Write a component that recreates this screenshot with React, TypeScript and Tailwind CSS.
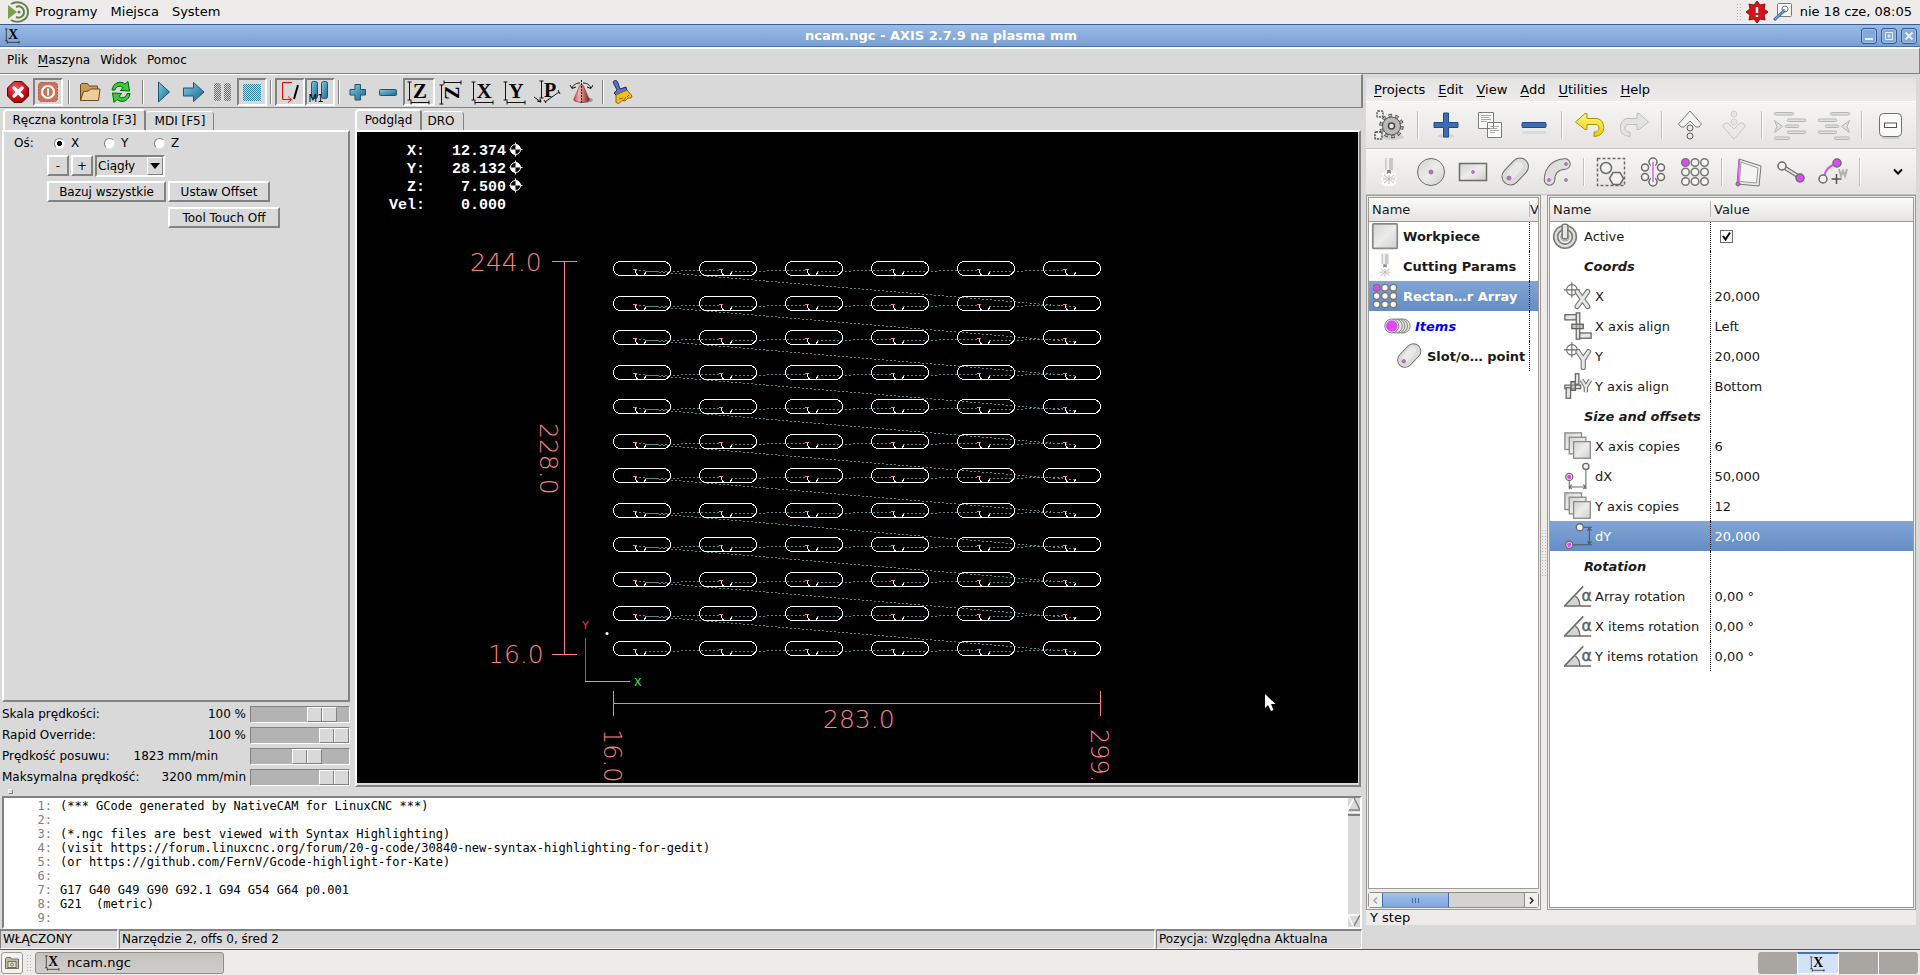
import React, { useState } from 'react';

const SLOT_COLS = [0, 1, 2, 3, 4, 5];
const SLOT_ROWS = [0, 1, 2, 3, 4, 5, 6, 7, 8, 9, 10, 11];

const gcode = [
  '(*** GCode generated by NativeCAM for LinuxCNC ***)',
  '',
  '(*.ngc files are best viewed with Syntax Highlighting)',
  '(visit https://forum.linuxcnc.org/forum/20-g-code/30840-new-syntax-highlighting-for-gedit)',
  '(or https://github.com/FernV/Gcode-highlight-for-Kate)',
  '',
  'G17 G40 G49 G90 G92.1 G94 G54 G64 p0.001',
  'G21  (metric)',
  '',
];

const overrides = [
  { label: 'Skala prędkości:', value: '100 %', pos: 83, pad: 'pr-1' },
  { label: 'Rapid Override:', value: '100 %', pos: 100, pad: 'pr-1' },
  { label: 'Prędkość posuwu:', value: '1823 mm/min', pos: 60, pad: 'pr-8' },
  { label: 'Maksymalna prędkość:', value: '3200 mm/min', pos: 100, pad: 'pr-1' },
];

type Param = { name: string; value?: string; icon?: React.ReactNode; kind?: 'group' | 'active' | 'selected' };

/* ---------- shared defs ---------- */

function Defs() {
  return (
    <svg width="0" height="0" className="absolute" aria-hidden="true">
      <defs>
        <linearGradient id="metal" x1="0" y1="0" x2="1" y2="1">
          <stop offset="0" stopColor="#d2d3d0" />
          <stop offset="0.5" stopColor="#ececea" />
          <stop offset="1" stopColor="#cfcfcd" />
        </linearGradient>
        <linearGradient id="teal" x1="0" y1="0" x2="1" y2="1">
          <stop offset="0" stopColor="#8fc7de" />
          <stop offset="0.5" stopColor="#4a98ba" />
          <stop offset="1" stopColor="#24678a" />
        </linearGradient>
        <linearGradient id="gold" x1="0" y1="0" x2="0" y2="1">
          <stop offset="0" stopColor="#fdf28a" />
          <stop offset="1" stopColor="#ecd000" />
        </linearGradient>
        <radialGradient id="redball" cx="0.4" cy="0.3" r="0.8">
          <stop offset="0" stopColor="#ef5a5a" />
          <stop offset="0.6" stopColor="#c80f1c" />
          <stop offset="1" stopColor="#7c0008" />
        </radialGradient>
        <linearGradient id="cone" x1="0" y1="0" x2="1" y2="0">
          <stop offset="0" stopColor="#b04a4a" />
          <stop offset="0.35" stopColor="#f3b0a8" />
          <stop offset="1" stopColor="#7c1f1f" />
        </linearGradient>
        <pattern id="stipple" width="2" height="2" patternUnits="userSpaceOnUse">
          <rect width="1" height="1" fill="#2f7da2" />
          <rect x="1" y="1" width="1" height="1" fill="#2f7da2" />
        </pattern>
      </defs>
    </svg>
  );
}

/* ---------- AXIS toolbar icons ---------- */

function AxisGlyph({ letter, size = 26 }: { letter: string; size?: number }) {
  return (
    <svg width={size} height={size} viewBox="0 0 26 26">
      <path d="M3.500 3v18M1.500 3h4M1.500 21h4M5 23.500h18M5 21.500v4M23 21.500v4" stroke="#111" fill="none" />
      <text x="14" y="19" textAnchor="middle" fontSize="21" fontWeight="700" fontFamily="Liberation Serif, serif">{letter}</text>
    </svg>
  );
}

function RotatedZGlyph() {
  return (
    <svg width="26" height="26" viewBox="0 0 26 26">
      <path d="M3.500 6v19M1.500 6h4M1.500 25h4M6 3.500h17M6 1.500v4M23 1.500v4" stroke="#111" fill="none" />
      <text x="-7" y="15" transform="rotate(90) translate(21 -22)" textAnchor="middle" fontSize="20" fontWeight="700" fontFamily="Liberation Serif, serif">Z</text>
    </svg>
  );
}

function PerspectiveGlyph() {
  return (
    <svg width="28" height="26" viewBox="0 0 28 26">
      <path d="M8.500 2v17M6.500 2h4M6.500 19h4M1 18l7 5M4 22l4 1-1-3M12 23l14-10M25 11l2 4M11 21l2 3" stroke="#111" fill="none" />
      <text x="17" y="18" textAnchor="middle" fontSize="20" fontWeight="700" fontFamily="Liberation Serif, serif">P</text>
    </svg>
  );
}

function StopIcon() {
  return (
    <svg width="24" height="24" viewBox="0 0 24 24">
      <path d="M8 1.500h8L22.500 8v8L16 22.500H8L1.500 16V8z" fill="url(#redball)" stroke="#5e0208" />
      <path d="M8 8l8 8M16 8l-8 8" stroke="#fff" strokeWidth="3.500" strokeLinecap="round" />
    </svg>
  );
}

function PowerIcon() {
  return (
    <svg width="22" height="22" viewBox="0 0 22 22">
      <rect x="1.500" y="1.500" width="19" height="19" rx="3" fill="#cd7358" stroke="#a9573f" strokeDasharray="2 1" />
      <circle cx="11" cy="11" r="6" fill="none" stroke="#fff" strokeWidth="2.200" />
      <path d="M11 7.500v7" stroke="#fff" strokeWidth="2" />
    </svg>
  );
}

function FolderIcon() {
  return (
    <svg width="24" height="22" viewBox="0 0 24 22">
      <path d="M2.500 19.500v-16l1-1h6l2 2.500h8v4" fill="#c99a5c" stroke="#6a4a20" />
      <path d="M2.500 19.500l3-9 5-0.500 2-2h9.500l-1.500 11.500z" fill="#eccf98" stroke="#6a4a20" />
    </svg>
  );
}

function ReloadIcon() {
  return (
    <svg width="24" height="24" viewBox="0 0 24 24">
      <path d="M3 10C4 3 11 0 16 4l3-2.500 1.500 9.500-9-0.500 2.500-3c-4-2.500-7-1-8 2.500z" fill="#35cf35" stroke="#0c5c0c" />
      <path d="M21 13.500c-1 7.500-8 10-13 6l-3 3L3.500 13l9 0.500-2.500 3c4 2.500 7 1 8-3z" fill="#35cf35" stroke="#0c5c0c" />
    </svg>
  );
}

function PlayIcon() {
  return (
    <svg width="16" height="24" viewBox="0 0 16 24">
      <path d="M2.500 2l11 10-11 10z" fill="url(#teal)" stroke="#1f5570" strokeLinejoin="round" />
    </svg>
  );
}

function StepIcon() {
  return (
    <svg width="24" height="22" viewBox="0 0 24 22">
      <path d="M1.500 7h10V1.500L22 11l-10.500 9.500V15h-10z" fill="url(#teal)" stroke="#1f5570" strokeLinejoin="round" />
    </svg>
  );
}

function PauseIcon() {
  return (
    <svg width="20" height="20" viewBox="0 0 20 20">
      <rect x="1" y="1" width="7" height="18" rx="2" fill="url(#stipple)" />
      <rect x="11" y="1" width="7" height="18" rx="2" fill="url(#stipple)" />
    </svg>
  );
}

function HaltIcon() {
  return (
    <svg width="20" height="20" viewBox="0 0 20 20">
      <rect x="1" y="2" width="18" height="17" rx="1" fill="url(#stipple)" />
    </svg>
  );
}

function SkipIcon() {
  return (
    <svg width="24" height="24" viewBox="0 0 24 24">
      <path d="M14 2.500H4.500v17H13M10 16.500l3.500 3-3.500 3" stroke="#f00" fill="none" />
      <path d="M16 19l4-14" stroke="#000" strokeWidth="2" />
    </svg>
  );
}

function OptionalPauseIcon() {
  return (
    <svg width="26" height="24" viewBox="0 0 26 24">
      <rect x="4.500" y="1.500" width="6" height="17" rx="2" fill="url(#teal)" stroke="#1f5570" />
      <rect x="14.500" y="1.500" width="6" height="17" rx="2" fill="url(#teal)" stroke="#1f5570" />
      <text x="9" y="22" textAnchor="middle" fontSize="10" fontFamily="DejaVu Sans, sans-serif">M1</text>
    </svg>
  );
}

function ZoomPlusIcon() {
  return (
    <svg width="20" height="20" viewBox="0 0 20 20">
      <path d="M7 2.500h5.500v5h5V13h-5v5H7v-5H2V7.500h5z" fill="url(#teal)" stroke="#1f5570" strokeLinejoin="round" />
    </svg>
  );
}

function ZoomMinusIcon() {
  return (
    <svg width="20" height="20" viewBox="0 0 20 20">
      <rect x="1.500" y="7.500" width="17" height="6" rx="1" fill="url(#teal)" stroke="#1f5570" />
    </svg>
  );
}

function ConeIcon() {
  return (
    <svg width="24" height="26" viewBox="0 0 24 26">
      <ellipse cx="15" cy="21" rx="9" ry="3" fill="#9a9a9a" />
      <path d="M11 6h3l6.500 15c-2 3-14 3-16 0z" fill="url(#cone)" stroke="#6a2020" strokeWidth="0.500" />
      <path d="M3 9c2-4 5-5 8-5M22 9c-2-4-5-5-8-5M1 6l2 3.500 4-1.500M24 6l-2 3.500-4-1.500" stroke="#111" fill="none" />
      <path d="M12.500 1v24" stroke="#111" strokeDasharray="2 1" />
    </svg>
  );
}

function BrushIcon() {
  return (
    <svg width="24" height="26" viewBox="0 0 24 26">
      <path d="M3 3c1-2 4-2 4.500 0L10 10l6-2 1 4-10 5-3-3 3-3z" fill="#5b74bd" stroke="#1d2b63" />
      <path d="M6 16l11-5 5 6-1 2-3 0-3 3-3-0.500-3 3-3-1z" fill="#f4be1c" stroke="#8a6508" />
      <path d="M9 20l4-1M13 22l3-4M17 18l2-2" stroke="#8a6508" fill="none" />
    </svg>
  );
}

/* ---------- NativeCAM icons, all on a 32 grid ---------- */

function Ico({ children, size = 32 }: { children: React.ReactNode; size?: number }) {
  return (
    <svg width={size} height={size} viewBox="0 0 32 32" fill="none" className="shrink-0">
      {children}
    </svg>
  );
}

const M = { fill: 'url(#metal)', stroke: '#6b6b69' };

function GearIcon() {
  return (
    <Ico>
      <ellipse cx="18" cy="28" rx="12" ry="3" fill="#d0d0ce" />
      <rect x="3" y="2" width="6" height="6" rx="1" fill="#eee" stroke="#555" strokeWidth="1.500" strokeDasharray="2 1" />
      <rect x="1" y="23" width="7" height="7" rx="1" fill="#eee" stroke="#444" strokeWidth="1.500" strokeDasharray="2 1" />
      <circle cx="17.500" cy="17" r="10.500" stroke="#555" strokeWidth="3.500" strokeDasharray="3.600 3" />
      <circle cx="17.500" cy="17" r="9" fill="#b9bab6" stroke="#555" />
      <circle cx="17.500" cy="17" r="10.500" stroke="#b9bab6" strokeWidth="1.500" strokeDasharray="2.600 4" strokeDashoffset="-0.500" />
      <circle cx="17.500" cy="17" r="3" fill="#e8e8e6" stroke="#444" strokeWidth="1.500" />
    </Ico>
  );
}

function AddIcon() {
  return (
    <Ico>
      <ellipse cx="16" cy="27" rx="8" ry="2" fill="#d2d2d0" />
      <path d="M13.500 4h5v9.500H28v5h-9.500V28h-5v-9.500H4v-5h9.500z" fill="#3d6db0" stroke="#24498a" strokeLinejoin="round" />
    </Ico>
  );
}

function CopyIcon() {
  return (
    <Ico>
      <path d="M4.500 3.500h15v16h-15zM13.500 13.500h14v15h-14z" fill="#fbfbfa" stroke="#7c7c7a" />
      <path d="M7 6.500h10M7 8.500h8M7 10.500h10M7 12.500h6M16 17.500h9M16 19.500h7M16 21.500h9M16 23.500h5" stroke="#a8a8a6" />
    </Ico>
  );
}

function RemoveIcon() {
  return (
    <Ico>
      <rect x="4" y="22" width="24" height="3" rx="1" fill="#dadad8" />
      <rect x="4" y="13.500" width="24" height="5" rx="1" fill="#3d6db0" stroke="#24498a" />
    </Ico>
  );
}

function UndoIcon() {
  return (
    <Ico>
      <path d="M1.500 13L11 4.500h2v5h10c9 2 9 16 0 17.500l-3 0.500v-4.500h2c4-1 4-7 0-7.500H13v5h-2z" fill="url(#gold)" stroke="#a89400" strokeLinejoin="round" />
    </Ico>
  );
}

function RedoIcon() {
  return (
    <Ico>
      <path d="M30.500 13L21 4.500h-2v5H9c-9 2-9 16 0 17.500l3 0.500v-4.500h-2c-4-1-4-7 0-7.500h9v5h2z" fill="#e3e3e1" stroke="#bdbebb" strokeLinejoin="round" />
    </Ico>
  );
}

function MoveUpIcon() {
  return (
    <Ico>
      <path d="M16 2L4.500 15l2.500 3h3l6-6 6 6h3l2.500-3z" fill="#f1f1ef" stroke="#7b7b79" strokeLinejoin="round" />
      <circle cx="16" cy="19" r="3" fill="#e6e6e4" stroke="#5f5f5d" />
      <circle cx="16" cy="27" r="3" fill="#e6e6e4" stroke="#5f5f5d" />
    </Ico>
  );
}

function MoveDownIcon() {
  return (
    <Ico>
      <circle cx="16" cy="5" r="3" fill="#e6e6e4" stroke="#d0d0ce" />
      <path d="M16 30L4.500 17l2.500-3h3l6 6 6-6h3l2.500 3z" fill="#e9e9e7" stroke="#c6c6c4" strokeLinejoin="round" />
      <circle cx="16" cy="13" r="3" fill="#e6e6e4" stroke="#d0d0ce" />
    </Ico>
  );
}

function IndentIcon({ flip }: { flip?: boolean }) {
  return (
    <Ico>
      <g transform={flip ? 'translate(32 0) scale(-1 1)' : undefined} stroke="#b3b4b1" fill="#e0e0de">
        <rect x="0.500" y="3.500" width="19" height="2.500" rx="1" />
        <rect x="13.500" y="10" width="18" height="2.500" rx="1" />
        <rect x="11.500" y="16" width="13" height="2.500" rx="1" />
        <rect x="13.500" y="22" width="18" height="2.500" rx="1" />
        <rect x="0.500" y="28" width="15" height="2.500" rx="1" />
        <path d="M0.500 11.500l8 6-8 6 2.500-6z" />
      </g>
    </Ico>
  );
}

function CollapseIcon() {
  return (
    <Ico>
      <path d="M8 29h17" stroke="#cfcfcd" strokeWidth="2" />
      <rect x="5.500" y="4.500" width="22" height="23" rx="4" fill="#fafaf9" stroke="#6f6f6d" />
      <rect x="10.500" y="14" width="12" height="4.500" fill="#fff" stroke="#555" />
    </Ico>
  );
}

function CutterIcon({ size }: { size?: number }) {
  return (
    <Ico size={size}>
      <path d="M12 2h8v12h-8z" fill="#c9cac7" />
      <path d="M13.500 2h2.500v12h-2.500z" fill="#efefed" />
      <path d="M14 14h4v4h-4z" fill="#8c8d8a" />
      <path d="M16 17v13M9 17l14 11M23 17L9 28M8 23h16M12 30l8-13M20 30l-8-13" stroke="#fff" strokeWidth="2.500" />
      <path d="M16 19v9M11 19l10 8M21 19l-10 8M10 23h4M18 23h4" stroke="#b4b5b2" />
    </Ico>
  );
}

function CircleIcon() {
  return (
    <Ico>
      <circle cx="16" cy="16" r="13.500" {...M} />
      <circle cx="16" cy="16" r="2" fill="#d957f2" stroke="#7f7f7d" />
    </Ico>
  );
}

function RectIcon() {
  return (
    <Ico>
      <rect x="2.500" y="7.500" width="27" height="17" {...M} strokeWidth="1.500" />
      <circle cx="16" cy="16" r="1.500" fill="#d957f2" stroke="#a58bab" />
    </Ico>
  );
}

function SlotIcon({ size }: { size?: number }) {
  return (
    <Ico size={size}>
      <g strokeLinecap="round">
        <path d="M11.500 20.500l9.500-10" stroke="#6b6b69" strokeWidth="18" />
        <path d="M11.500 20.500l9.500-10" stroke="#dadad8" strokeWidth="16" />
        <path d="M12.500 18l7-8" stroke="#e9e9e7" strokeWidth="9" />
      </g>
      <circle cx="10" cy="22" r="2" fill="#d957f2" stroke="#8b7a8f" />
    </Ico>
  );
}

function ArcSlotIcon() {
  return (
    <Ico>
      <g strokeLinecap="round">
        <path d="M8.500 24C8.500 14 15 8.500 24 8" stroke="#6b6b69" strokeWidth="11.500" />
        <path d="M8.500 24C8.500 14 15 8.500 24 8" stroke="#dededc" strokeWidth="9.500" />
      </g>
      <circle cx="25" cy="8" r="1.500" fill="#d957f2" stroke="#a58bab" />
      <circle cx="8" cy="24" r="1.500" fill="#d957f2" stroke="#a58bab" />
      <circle cx="25" cy="24" r="1.500" fill="#d957f2" stroke="#a58bab" />
    </Ico>
  );
}

function GroupIcon() {
  return (
    <Ico>
      <rect x="2.500" y="2.500" width="27" height="27" stroke="#6b6b69" strokeDasharray="3 2" strokeWidth="1.500" />
      <circle cx="11" cy="12" r="5.500" {...M} fill="#f2f2f0" strokeWidth="1.500" />
      <path d="M18 16.500h7l3.500 6-3.500 6h-7l-3.500-6z" fill="#f2f2f0" stroke="#6b6b69" strokeWidth="1.500" />
    </Ico>
  );
}

function MirrorIcon() {
  const ring = { fill: '#f2f2f0', stroke: '#6b6b69', strokeWidth: 1.5 };
  return (
    <Ico>
      <circle cx="16" cy="6" r="4" {...ring} />
      <circle cx="8" cy="11.500" r="3.500" {...ring} />
      <circle cx="24" cy="11.500" r="3.500" {...ring} />
      <circle cx="8" cy="21" r="3.500" {...ring} />
      <circle cx="24" cy="21" r="3.500" {...ring} />
      <circle cx="16" cy="26" r="4" {...ring} />
      <path d="M16 6v20" stroke="#fff" strokeWidth="4" />
      <path d="M16 6v20" stroke="#d957f2" strokeWidth="1.500" />
    </Ico>
  );
}

function ArrayIcon({ size }: { size?: number }) {
  return (
    <Ico size={size}>
      {[6.5, 16, 25.5].map((y) =>
        [6.5, 16, 25.5].map((x) => (
          <circle key={`${x}-${y}`} cx={x} cy={y} r="3.800" fill={x === 6.5 && y === 6.5 ? '#e04af5' : '#f6f6f4'} stroke="#777775" strokeWidth="1.500" />
        ))
      )}
    </Ico>
  );
}

function PolylineIcon() {
  return (
    <Ico>
      <path d="M6 3l22 7-2 20-22-2z" fill="#ececea" stroke="#767674" />
      <path d="M8 6l17 6-1.500 15-17-1.500z" fill="#f4f4f2" stroke="#9a9a98" />
      <path d="M6.500 3L5 28" stroke="#d957f2" strokeWidth="1.500" />
      <circle cx="5" cy="28" r="2" fill="#d957f2" stroke="#6b6b69" />
    </Ico>
  );
}

function LineIcon() {
  return (
    <Ico>
      <path d="M7 10l19 12" stroke="#6b6b69" strokeWidth="4" />
      <path d="M7 10l19 12" stroke="#e6e6e4" strokeWidth="2" />
      <circle cx="7" cy="10" r="4" fill="#f2f2f0" stroke="#6b6b69" strokeWidth="1.500" />
      <circle cx="25" cy="22" r="4" fill="#e04af5" stroke="#6b6b69" strokeWidth="1.500" />
    </Ico>
  );
}

function ArcToIcon() {
  return (
    <Ico>
      <path d="M7 22c1-8 6-13 13-14" stroke="#d957f2" strokeWidth="2" />
      <circle cx="6" cy="23" r="4" fill="#f2f2f0" stroke="#6b6b69" strokeWidth="1.500" />
      <circle cx="20" cy="7" r="4" fill="#e04af5" stroke="#6b6b69" strokeWidth="1.500" />
      <path d="M19.500 18v10M14.500 23h10" stroke="#555" strokeWidth="1.500" />
      <path d="M22 13l2 7 2-5 2 5 2-7" stroke="#b0b0ae" strokeWidth="2" />
    </Ico>
  );
}

function WorkpieceIcon() {
  return (
    <Ico size={28}>
      <rect x="2" y="2" width="28" height="28" rx="1" fill="url(#metal)" stroke="#8a8a88" strokeWidth="2" />
    </Ico>
  );
}

function ItemsIcon() {
  return (
    <Ico size={28}>
      {[23, 20, 17, 14].map((x) => (
        <circle key={x} cx={x} cy="16" r="8" fill="#e4e4e2" stroke="#777775" />
      ))}
      <circle cx="10" cy="16" r="8" fill="#e2e2e0" stroke="#777775" />
      <circle cx="10" cy="16" r="6.500" fill="#e04af5" />
    </Ico>
  );
}

function ActiveIcon() {
  return (
    <Ico size={26}>
      <circle cx="16" cy="17" r="14" fill="#dededc" stroke="#7b7b79" strokeWidth="2" />
      <circle cx="16" cy="17" r="9" fill="#ececea" stroke="#7b7b79" strokeWidth="2" />
      <circle cx="16" cy="17" r="5" fill="#fff" stroke="#7b7b79" />
      <rect x="12.500" y="1.500" width="7" height="18" rx="2" fill="#e6e6e4" stroke="#7b7b79" strokeWidth="2" />
    </Ico>
  );
}

function PosIcon({ axis }: { axis: 'X' | 'Y' }) {
  return (
    <Ico size={28}>
      <circle cx="9" cy="9" r="6" stroke="#6b6b69" strokeWidth="1.200" />
      <path d="M9 0v18M0 9h18" stroke="#6b6b69" strokeWidth="1.200" />
      {[{ c: '#777775', w: 6 }, { c: '#e6e6e4', w: 3.5 }].map((s) => (
        <path key={s.c} d={axis === 'X' ? 'M15 11l12 17M27 11L15 28' : 'M16 11l6 9 6-9M22 20v9'} stroke={s.c} strokeWidth={s.w} strokeLinecap="round" />
      ))}
    </Ico>
  );
}

function AlignXIcon() {
  return (
    <Ico size={28}>
      <rect x="1" y="3" width="14" height="6" {...M} strokeWidth="1.500" />
      <rect x="14" y="1" width="4" height="30" {...M} strokeWidth="1.500" />
      <rect x="9" y="14" width="13" height="5" fill="#a9aaa7" fillOpacity="0.600" stroke="#5f5f5d" strokeWidth="1.500" />
      <rect x="18" y="24" width="13" height="6" {...M} strokeWidth="1.500" />
    </Ico>
  );
}

function AlignYIcon() {
  return (
    <Ico size={28}>
      <rect x="1" y="15" width="18" height="4" {...M} strokeWidth="1.500" />
      <rect x="2.500" y="18" width="5" height="12" {...M} strokeWidth="1.500" />
      <rect x="8" y="11" width="5" height="10" fill="#a9aaa7" fillOpacity="0.600" stroke="#5f5f5d" strokeWidth="1.500" />
      <rect x="13" y="2" width="4" height="12" {...M} strokeWidth="1.500" />
      <path d="M20 9l5 8 5-8M25 17v6" stroke="#777775" strokeWidth="5" />
      <path d="M20 9l5 8 5-8M25 17v6" stroke="#e6e6e4" strokeWidth="2.500" />
    </Ico>
  );
}

function CopiesIcon() {
  return (
    <Ico size={28}>
      {[1, 6, 11].map((p) => (
        <rect key={p} x={p} y={p} width="19" height="19" fill="url(#metal)" stroke="#8a8a88" strokeWidth="1.500" />
      ))}
    </Ico>
  );
}

function DxIcon() {
  return (
    <Ico size={28}>
      <path d="M6 16v15M25 6v25M7 28.500h17M9 26l-3 2.500L9 31M22 26l3 2.500-3 2.500" stroke="#6b6b69" strokeWidth="1.200" />
      <circle cx="6" cy="17" r="4" fill="#f2f2f0" stroke="#6b6b69" strokeWidth="1.500" />
      <circle cx="6" cy="17" r="2.500" fill="#e04af5" />
      <circle cx="25" cy="5" r="3.500" fill="#f2f2f0" stroke="#6b6b69" strokeWidth="1.500" />
    </Ico>
  );
}

function DyIcon() {
  return (
    <Ico size={28}>
      <path d="M18 6h14M6 26h26M29 8v16M26.500 10l2.500-3 2.500 3M26.500 22l2.500 3 2.500-3" stroke="#4f555f" strokeWidth="1.200" />
      <circle cx="18" cy="6" r="4" fill="#f2f2f0" stroke="#6b6b69" strokeWidth="1.500" />
      <circle cx="6" cy="26" r="4" fill="#f2f2f0" stroke="#6b6b69" strokeWidth="1.500" />
      <circle cx="6" cy="26" r="2.500" fill="#e04af5" />
    </Ico>
  );
}

function AngleIcon() {
  return (
    <Ico size={28}>
      <path d="M2 27l11-11c4 3 5 6 5 11z" fill="#d6d6d4" />
      <path d="M0 27.500h31M1 27L22 5" stroke="#6b6b69" strokeWidth="1.800" />
      <path d="M13 16c4 3 5 6 5 11" stroke="#6b6b69" strokeWidth="1.500" />
      <text x="26" y="22" textAnchor="middle" fontSize="18" fill="#5f5f5d" stroke="#5f5f5d" strokeWidth="0.500" fontFamily="DejaVu Sans, sans-serif">α</text>
    </Ico>
  );
}

/* ---------- preview drawing ---------- */

function HomedMark({ x, y }: { x: number; y: number }) {
  return (
    <g transform={`translate(${x} ${y})`}>
      <path d="M0-7V7M-6 0H7" stroke="#fff" />
      <circle r="5" fill="#000" stroke="#fff" />
      <path d="M0 0V-5A5 5 0 0 1 5 0zM0 0V5A5 5 0 0 1-5 0z" fill="#fff" />
    </g>
  );
}

function Preview() {
  const dro = [
    ['X:', '12.374'],
    ['Y:', '28.132'],
    ['Z:', '7.500'],
    ['Vel:', '0.000'],
  ];
  return (
    <svg className="block h-full w-full bg-black" role="img" aria-label="Podgląd">
      <g fill="#fff" fontSize="15" fontWeight="700" fontFamily="Liberation Mono, monospace">
        {dro.map(([k, v], i) => (
          <React.Fragment key={k}>
            <text x="68" y={23 + i * 18} textAnchor="end">{k}</text>
            <text x="149" y={23 + i * 18} textAnchor="end">{v}</text>
          </React.Fragment>
        ))}
      </g>
      <HomedMark x={158.5} y={17.5} />
      <HomedMark x={158.5} y={35.5} />
      <HomedMark x={158.5} y={53.5} />

      {/* rapid moves */}
      <g stroke="#4d8a8a" fill="none" strokeDasharray="2 2" shapeRendering="crispEdges">
        {SLOT_ROWS.map((r) => {
          const y = 138 + Math.round(r * 34.5);
          return (
            <React.Fragment key={r}>
              {SLOT_COLS.slice(1).map((c) => (
                <path key={c} d={`M${202 + c * 86} ${y + 1.5}h36M${238 + c * 86} ${y + 0.5}h40`} />
              ))}
              {r < 11 && <path d={`M278 ${y}L718 ${y + 37}`} />}
            </React.Fragment>
          );
        })}
      </g>

      {/* slots with lead-in */}
      <g fill="none" stroke="#fff" shapeRendering="crispEdges">
        {SLOT_ROWS.map((r) =>
          SLOT_COLS.map((c) => {
            const x = 256 + c * 86;
            const y = 129 + Math.round(r * 34.5);
            return (
              <g key={`${r}-${c}`} transform={`translate(${x} ${y})`}>
                <rect x="0.500" y="0.500" width="57" height="14" rx="7" />
                <path d="M22 9c0 3 2 5 5 5.500M31 14l2-3" />
                <path d="M20 8.500h4" stroke="#ff8080" />
              </g>
            );
          })
        )}
      </g>

      {/* dimensions */}
      <g stroke="#ff8080" fill="none" shapeRendering="crispEdges">
        <path d="M207.500 129v393M195 129.500h25M195 522.500h25M256.500 571.500h487M256.500 559v25M743.500 559v25" />
      </g>
      <g fill="#ff8080" fontSize="25" fontWeight="200" fontFamily="DejaVu Sans, sans-serif">
        <text x="113" y="139">244.0</text>
        <text x="131" y="531">16.0</text>
        <text x="466" y="596">283.0</text>
        <text transform="translate(183 291) rotate(90)">228.0</text>
      </g>
      <g fill="#ff8080" fontSize="24" fontWeight="200" fontFamily="DejaVu Sans, sans-serif">
        <text transform="translate(247 597) rotate(90)">16.0</text>
        <text transform="translate(734 597) rotate(90)">299.</text>
      </g>

      {/* origin */}
      <g fill="none" shapeRendering="crispEdges">
        <path d="M228.500 506v43" stroke="#ff3030" />
        <path d="M228 549.500h45" stroke="#30ff30" />
      </g>
      <g fontSize="11" fontFamily="DejaVu Sans, sans-serif">
        <text x="225" y="497" fill="#ff3030">Y</text>
        <text x="277" y="554" fill="#30ff30">X</text>
      </g>
      <circle cx="250" cy="501.500" r="1.500" fill="#fff" />
      <path d="M908 562v14l3-3 3 6 2.500-1-2.500-6h4.500z" fill="#fff" />
    </svg>
  );
}

/* ---------- small parts ---------- */

function TkButton({ children, sunken, className = 'w-[30px]', label }: { children: React.ReactNode; sunken?: boolean; className?: string; label: string }) {
  return (
    <button
      aria-label={label}
      aria-pressed={sunken}
      className={`${className} flex h-7 items-center justify-center ${sunken ? 'border-2 border-t-[#828282] border-l-[#828282] border-r-white border-b-white' : ''}`}
    >
      {children}
    </button>
  );
}

function TkSep({ wide }: { wide?: boolean }) {
  return (
    <span className={`${wide ? 'w-3' : 'w-2'} flex h-6 justify-center`}>
      <span className="w-[2px] border-r border-l border-l-[#828282] border-r-white" />
    </span>
  );
}

function PushButton({ children, className = '' }: { children: React.ReactNode; className?: string }) {
  return (
    <button className={`h-[21px] border-2 border-t-white border-l-white border-r-[#828282] border-b-[#828282] leading-[14px] ${className}`}>
      {children}
    </button>
  );
}

function GtkButton({ children, label, className = 'w-11' }: { children: React.ReactNode; label: string; className?: string }) {
  return (
    <button aria-label={label} className={`${className} flex h-full items-center justify-center`}>
      {children}
    </button>
  );
}

function GtkSep() {
  return (
    <span className="flex w-3 justify-center">
      <span className="h-7 w-[2px] border-r border-l border-l-[#c3c1be] border-r-white" />
    </span>
  );
}

function Grip({ className }: { className: string }) {
  return <span className={`${className} bg-[radial-gradient(circle,#b5b3b0_25%,transparent_30%)] bg-[length:3px_3px]`} />;
}

function WindowButton({ children, label }: { children: React.ReactNode; label: string }) {
  return (
    <button aria-label={label} className="flex size-4 items-center justify-center rounded-[3px] border border-[#345d95] bg-[#82a8dc] shadow-[inset_0_0_0_1px_#9dbce6]">
      <svg width="12" height="12" viewBox="0 0 12 12" fill="none" stroke="#e8f0fb">{children}</svg>
    </button>
  );
}

const axisMenu = ['Plik', 'Maszyna', 'Widok', 'Pomoc'];
const camMenu = ['Projects', 'Edit', 'View', 'Add', 'Utilities', 'Help'];

const params: Param[] = [
  { name: 'Active', kind: 'active', icon: <ActiveIcon /> },
  { name: 'Coords', kind: 'group' },
  { name: 'X', value: '20,000', icon: <PosIcon axis="X" /> },
  { name: 'X axis align', value: 'Left', icon: <AlignXIcon /> },
  { name: 'Y', value: '20,000', icon: <PosIcon axis="Y" /> },
  { name: 'Y axis align', value: 'Bottom', icon: <AlignYIcon /> },
  { name: 'Size and offsets', kind: 'group' },
  { name: 'X axis copies', value: '6', icon: <CopiesIcon /> },
  { name: 'dX', value: '50,000', icon: <DxIcon /> },
  { name: 'Y axis copies', value: '12', icon: <CopiesIcon /> },
  { name: 'dY', value: '20,000', icon: <DyIcon />, kind: 'selected' },
  { name: 'Rotation', kind: 'group' },
  { name: 'Array rotation', value: '0,00 °', icon: <AngleIcon /> },
  { name: 'X items rotation', value: '0,00 °', icon: <AngleIcon /> },
  { name: 'Y items rotation', value: '0,00 °', icon: <AngleIcon /> },
];

const tree = [
  { name: 'Workpiece', icon: <WorkpieceIcon />, cell: 'pl-[2px]', text: '' },
  { name: 'Cutting Params', icon: <CutterIcon size={28} />, cell: 'pl-[2px]', text: '' },
  { name: 'Rectan…r Array', icon: <ArrayIcon size={28} />, cell: 'pl-[2px]', text: 'text-white', selected: true },
  { name: 'Items', icon: <ItemsIcon />, cell: 'pl-[14px]', text: 'italic text-[#0000e6]' },
  { name: 'Slot/o… point', icon: <SlotIcon size={28} />, cell: 'pl-[26px]', text: '' },
];

/* ---------- AXIS left side ---------- */

function ManualPanel() {
  const [axis, setAxis] = useState('X');
  return (
    <div className="flex w-[350px] shrink-0 flex-col pl-[2px]">
      <div className="flex items-end pl-px">
        <button className="h-[21px] w-[143px] rounded-t-[4px] border-2 border-b-0 border-t-white border-l-white border-r-[#828282] leading-[17px] whitespace-nowrap">
          Ręczna kontrola [F3]
        </button>
        <button className="h-[19px] w-[68px] rounded-t-[4px] border border-b-0 border-t-white border-l-transparent border-r-[#828282] whitespace-nowrap">MDI [F5]</button>
      </div>
      <div className="flex-1 border-2 border-t-white border-l-white border-r-[#828282] border-b-[#828282] pt-px pl-[10px]">
        <div className="flex h-5 items-center">
          <span className="w-10">Oś:</span>
          {['X', 'Y', 'Z'].map((a) => (
            <label key={a} className="flex w-[50px] items-center gap-[6px]">
              <input
                type="radio"
                name="axis"
                value={a}
                checked={axis === a}
                onChange={() => setAxis(a)}
                className="size-[11px] appearance-none rounded-full border border-t-[#828282] border-l-[#828282] border-r-[#e8e8e8] border-b-[#e8e8e8] bg-white checked:bg-[radial-gradient(circle,#000_35%,#fff_40%)]"
              />
              {a}
            </label>
          ))}
        </div>
        <div className="mt-[2px] flex gap-[2px] pl-[33px]">
          <PushButton className="w-[22px]">-</PushButton>
          <PushButton className="w-[22px]">+</PushButton>
          <span className="relative flex">
            <select aria-label="Posuw" className="h-[22px] w-[70px] appearance-none border-2 border-t-[#828282] border-l-[#828282] border-r-white border-b-white bg-[#d9d9d9] pl-px">
              <option>Ciągły</option>
            </select>
            <span className="pointer-events-none absolute top-[2px] right-[2px] flex h-[18px] w-4 items-center justify-center border border-t-white border-l-white border-r-[#828282] border-b-[#828282]">
              <span className="border-x-[5px] border-t-[6px] border-x-transparent border-t-black" />
            </span>
          </span>
        </div>
        <div className="mt-[4px] flex w-[270px] flex-wrap gap-x-[2px] gap-y-[5px] pl-[33px]">
          <PushButton className="w-[119px]">Bazuj wszystkie</PushButton>
          <PushButton className="w-[102px]">Ustaw Offset</PushButton>
          <PushButton className="ml-[121px] w-[112px]">Tool Touch Off</PushButton>
        </div>
      </div>
      <div className="mt-px">
        {overrides.map((o) => (
          <label key={o.label} className="flex h-[21px] items-center pt-px">
            <span>{o.label}</span>
            <span className={`ml-auto ${o.pad}`}>{o.value}</span>
            <input
              type="range"
              defaultValue={o.pos}
              className="h-[17px] w-[100px] appearance-none border border-t-[#828282] border-l-[#828282] border-r-white border-b-white bg-[#b3b3b3] [&::-webkit-slider-thumb]:h-[15px] [&::-webkit-slider-thumb]:w-[30px] [&::-webkit-slider-thumb]:appearance-none [&::-webkit-slider-thumb]:border [&::-webkit-slider-thumb]:border-t-white [&::-webkit-slider-thumb]:border-l-white [&::-webkit-slider-thumb]:border-r-[#828282] [&::-webkit-slider-thumb]:border-b-[#828282] [&::-webkit-slider-thumb]:bg-[linear-gradient(90deg,#d9d9d9_13px,#828282_13px,#828282_14px,#fff_14px,#fff_15px,#d9d9d9_15px)]"
            />
          </label>
        ))}
      </div>
    </div>
  );
}

function AxisPane() {
  return (
    <div className="flex min-w-0 flex-1 flex-col">
      <div className="flex h-[34px] items-center border-r-2 border-b border-t border-t-white border-r-[#828282] border-b-[#828282] pt-[2px] pl-[3px]">
        <TkButton label="E-stop"><StopIcon /></TkButton>
        <TkButton label="Zasilanie" sunken><PowerIcon /></TkButton>
        <TkSep wide />
        <TkButton label="Otwórz"><FolderIcon /></TkButton>
        <TkButton label="Przeładuj" className="w-8"><ReloadIcon /></TkButton>
        <TkSep wide />
        <TkButton label="Start"><PlayIcon /></TkButton>
        <TkButton label="Krok"><StepIcon /></TkButton>
        <TkButton label="Pauza" className="w-7"><PauseIcon /></TkButton>
        <TkButton label="Stop" sunken><HaltIcon /></TkButton>
        <TkSep />
        <TkButton label="Pomiń linie" sunken><SkipIcon /></TkButton>
        <TkButton label="Pauza opcjonalna" sunken><OptionalPauseIcon /></TkButton>
        <TkSep />
        <TkButton label="Powiększ"><ZoomPlusIcon /></TkButton>
        <TkButton label="Pomniejsz"><ZoomMinusIcon /></TkButton>
        <TkButton label="Widok Z" sunken className="w-8"><AxisGlyph letter="Z" /></TkButton>
        <TkButton label="Widok Z obrócony" className="w-8"><RotatedZGlyph /></TkButton>
        <TkButton label="Widok X" className="w-8"><AxisGlyph letter="X" /></TkButton>
        <TkButton label="Widok Y" className="w-8"><AxisGlyph letter="Y" /></TkButton>
        <TkButton label="Perspektywa" className="w-8"><PerspectiveGlyph /></TkButton>
        <TkButton label="Obrót" className="w-9"><ConeIcon /></TkButton>
        <TkSep />
        <TkButton label="Wyczyść"><BrushIcon /></TkButton>
      </div>

      <div className="flex min-h-0 flex-1 gap-[5px] pt-px pr-[2px]">
        <ManualPanel />
        <div className="flex min-w-0 flex-1 flex-col">
          <div className="flex items-end">
            <button className="h-[21px] w-[67px] rounded-t-[4px] border-2 border-b-0 border-t-white border-l-white border-r-[#828282] leading-[17px]">Podgląd</button>
            <button className="h-[19px] w-[42px] rounded-t-[4px] border border-b-0 border-t-white border-l-transparent border-r-[#828282] pr-1">DRO</button>
          </div>
          <div className="min-h-0 flex-1 border-2 border-t-white border-l-white border-r-[#828282] border-b-[#828282] pr-px pb-[2px]">
            <Preview />
          </div>
        </div>
      </div>

      <div className="flex h-[9px] items-center pl-2">
        <span className="size-[5px] border border-t-white border-l-white border-r-[#828282] border-b-[#828282]" />
      </div>

      <div className="mr-px ml-[2px] flex h-[133px] border-2 border-t-[#828282] border-l-[#828282] border-r-white border-b-white bg-white">
        <ol className="flex-1 overflow-hidden pt-px font-['DejaVu_Sans_Mono',monospace] text-black">
          {gcode.map((line, i) => (
            <li key={i} className="flex h-[14px] leading-[14px] whitespace-pre">
              <span className="w-[56px] pr-2 text-right text-[#808080]">{i + 1}:</span>
              {line}
            </li>
          ))}
        </ol>
        <div className="flex w-3 flex-col items-center justify-between bg-[#d9d9d9]">
          <div className="w-full">
            <svg width="12" height="13" viewBox="0 0 12 13" className="block">
              <path d="M6 0L0 12h12z" fill="#d9d9d9" />
              <path d="M6 0L0 12" stroke="#fff" strokeWidth="1.500" />
              <path d="M6 0l6 12H1" stroke="#828282" fill="none" strokeWidth="1.500" />
            </svg>
            <div className="mt-px h-1 border-b-2 border-t border-t-white border-b-[#828282]" />
          </div>
          <svg width="12" height="13" viewBox="0 0 12 13" className="block">
            <path d="M6 12L0 1h12z" fill="#d9d9d9" />
            <path d="M12 1H0l6 12" stroke="#fff" fill="none" strokeWidth="1.500" />
            <path d="M12 1L6 12" stroke="#828282" strokeWidth="1.500" />
          </svg>
        </div>
      </div>

      <div className="mr-px flex h-5 gap-px leading-[17px]">
        <span className="w-[118px] border border-t-2 border-t-[#828282] border-l-[#828282] border-r-white border-b-white pl-[2px]">WŁĄCZONY</span>
        <span className="flex-1 border border-t-2 border-t-[#828282] border-l-[#828282] border-r-white border-b-white pl-[2px]">Narzędzie 2, offs 0, śred 2</span>
        <span className="w-[206px] border border-t-2 border-t-[#828282] border-l-[#828282] border-r-white border-b-white pl-[2px]">Pozycja: Względna Aktualna</span>
      </div>
    </div>
  );
}

/* ---------- NativeCAM ---------- */

const toolbarStyle = 'flex items-center border-t border-b border-t-white border-b-[#c3c1be] bg-linear-to-b from-[#f6f5f4] to-[#e5e4e2] pl-[2px]';
const headerStyle = 'h-[23px] border-b border-[#9d9b98] bg-linear-to-b from-[#fbfbfa] to-[#e4e3e1] pl-[3px] text-left font-normal';
const frameStyle = 'border border-[#9d9b98] bg-[#edeceb] p-px';

function CamPane() {
  const [active, setActive] = useState(true);
  return (
    <div className="mt-1 mb-6 flex w-[550px] shrink-0 flex-col bg-[#edeceb] text-[13px] text-[#1a1a1a]">
      <nav className="flex h-[23px] items-center gap-[13px] bg-linear-to-b from-[#e4e3e1] to-[#edeceb] pl-2 text-black">
        {camMenu.map((m) => (
          <button key={m}><span className="underline underline-offset-2">{m[0]}</span>{m.slice(1)}</button>
        ))}
      </nav>
      <div className={`${toolbarStyle} h-[48px]`}>
        <GtkButton label="Project settings"><GearIcon /></GtkButton>
        <GtkSep />
        <GtkButton label="Add"><AddIcon /></GtkButton>
        <GtkButton label="Duplicate"><CopyIcon /></GtkButton>
        <GtkButton label="Remove"><RemoveIcon /></GtkButton>
        <GtkSep />
        <GtkButton label="Undo"><UndoIcon /></GtkButton>
        <GtkButton label="Redo"><RedoIcon /></GtkButton>
        <GtkSep />
        <GtkButton label="Move up"><MoveUpIcon /></GtkButton>
        <GtkButton label="Move down"><MoveDownIcon /></GtkButton>
        <GtkSep />
        <GtkButton label="Append to group"><IndentIcon /></GtkButton>
        <GtkButton label="Remove from group"><IndentIcon flip /></GtkButton>
        <GtkSep />
        <GtkButton label="Collapse"><CollapseIcon /></GtkButton>
      </div>
      <div className={`${toolbarStyle} h-[46px]`}>
        <GtkButton label="Cutter" className="w-[42px]"><CutterIcon /></GtkButton>
        <GtkButton label="Circle" className="w-[42px]"><CircleIcon /></GtkButton>
        <GtkButton label="Rectangle" className="w-[42px]"><RectIcon /></GtkButton>
        <GtkButton label="Slot" className="w-[42px]"><SlotIcon /></GtkButton>
        <GtkButton label="Arc slot" className="w-[42px]"><ArcSlotIcon /></GtkButton>
        <GtkSep />
        <GtkButton label="Group" className="w-[42px]"><GroupIcon /></GtkButton>
        <GtkButton label="Circular array" className="w-[42px]"><MirrorIcon /></GtkButton>
        <GtkButton label="Rectangular array" className="w-[42px]"><ArrayIcon /></GtkButton>
        <GtkSep />
        <GtkButton label="Polyline" className="w-[42px]"><PolylineIcon /></GtkButton>
        <GtkButton label="Line" className="w-[42px]"><LineIcon /></GtkButton>
        <GtkButton label="Arc" className="w-[42px]"><ArcToIcon /></GtkButton>
        <GtkSep />
        <button aria-label="More" className="mr-3 ml-auto">
          <svg width="12" height="8" viewBox="0 0 12 8" fill="none"><path d="M2 1.500l4 4 4-4" stroke="#000" strokeWidth="2" /></svg>
        </button>
      </div>

      <div className="flex min-h-0 flex-1">
        <div className={`${frameStyle} flex w-[175px] flex-col gap-[3px]`}>
          <div className="flex-1 overflow-hidden border border-[#9d9b98] bg-white">
            <table className="w-full table-fixed border-collapse">
              <thead>
                <tr>
                  <th className={`${headerStyle} w-[160px]`}>Name</th>
                  <th className={headerStyle}><span className="-ml-[3px] flex h-4 items-center border-l border-[#bdbbb8]">V</span></th>
                </tr>
              </thead>
              <tbody>
                {tree.map((t) => (
                  <tr key={t.name} className={`h-[30px] font-bold ${t.selected ? 'bg-linear-to-b from-[#82a5d6] to-[#648dc4]' : ''}`}>
                    <td className={`border-r border-dotted border-black ${t.cell}`}>
                      <span className={`flex items-center gap-1 whitespace-nowrap ${t.text}`}>{t.icon}{t.name}</span>
                    </td>
                    <td />
                  </tr>
                ))}
              </tbody>
            </table>
          </div>
          <div className="flex h-4 rounded-[3px] border border-[#8f8d8a] bg-[#d4d3d0]">
            <button aria-label="Scroll left" className="flex w-[13px] items-center justify-center bg-[#f1f0ef]">
              <svg width="5" height="7" viewBox="0 0 5 7" fill="none"><path d="M4 0.500l-3 3 3 3" stroke="#aaa8a5" strokeWidth="1.500" /></svg>
            </button>
            <span className="flex w-[67px] items-center justify-center gap-[2px] border-x border-[#3f6aa5] bg-linear-to-b from-[#a3c2ea] to-[#80a5da]">
              <i className="h-[5px] w-px bg-[#3f6aa5]" /><i className="h-[5px] w-px bg-[#3f6aa5]" /><i className="h-[5px] w-px bg-[#3f6aa5]" />
            </span>
            <button aria-label="Scroll right" className="ml-auto flex w-[14px] items-center justify-center border-l border-[#8f8d8a] bg-[#f1f0ef]">
              <svg width="5" height="7" viewBox="0 0 5 7" fill="none"><path d="M1 0.500l3 3-3 3" stroke="#222" strokeWidth="1.500" /></svg>
            </button>
          </div>
        </div>
        <div className="flex w-[6px] items-center justify-center"><Grip className="h-12 w-[6px]" /></div>
        <div className={`${frameStyle} flex min-w-0 flex-1`}>
          <div className="flex-1 overflow-hidden border border-[#9d9b98] bg-white">
            <table className="w-full table-fixed border-collapse">
              <thead>
                <tr>
                  <th className={`${headerStyle} w-[160px]`}>Name</th>
                  <th className={headerStyle}><span className="-ml-[3px] flex h-4 items-center border-l border-[#bdbbb8] pl-[3px]">Value</span></th>
                </tr>
              </thead>
              <tbody>
                {params.map((p) => (
                  <tr key={p.name} className={`h-[30px] ${p.kind === 'selected' ? 'bg-linear-to-b from-[#82a5d6] to-[#648dc4] text-white' : ''}`}>
                    <td className="border-r border-dotted border-black">
                      {p.kind === 'group' ? (
                        <span className="block pl-[34px] font-bold italic whitespace-nowrap">{p.name}</span>
                      ) : (
                        <span className={`flex items-center whitespace-nowrap ${p.kind === 'active' ? 'gap-[6px] pl-[2px]' : 'gap-[3px] pl-[14px]'}`}>{p.icon}{p.name}</span>
                      )}
                    </td>
                    <td className="pl-1">
                      {p.kind === 'active' ? (
                        <span className="relative ml-[5px] flex size-[13px]">
                          <input
                            type="checkbox"
                            aria-label="Active"
                            checked={active}
                            onChange={(e) => setActive(e.target.checked)}
                            className="size-[13px] appearance-none border border-[#6f6d6a] bg-white"
                          />
                          {active && (
                            <svg width="13" height="13" viewBox="0 0 13 13" className="pointer-events-none absolute" fill="none"><path d="M3 6l2.500 3.500L10 2.500" stroke="#000" strokeWidth="2" /></svg>
                          )}
                        </span>
                      ) : p.value}
                    </td>
                  </tr>
                ))}
              </tbody>
            </table>
          </div>
        </div>
      </div>
      <div className="h-[15px] pl-1 leading-[15px] text-black">Y step</div>
    </div>
  );
}

/* ---------- desktop ---------- */

export default function App() {
  return (
    <div className="flex h-screen w-full cursor-default flex-col overflow-hidden bg-[#d9d9d9] font-['DejaVu_Sans',sans-serif] text-[12px] leading-[15px] text-black">
      <Defs />
      <header className="flex h-6 shrink-0 items-center bg-[#edeceb] px-2 pb-px text-[13px]">
        <svg width="22" height="22" viewBox="0 0 22 22" fill="none" className="mr-[5px]">
          <path d="M0 4l9 7-9 7z" fill="#79a14d" />
          <path d="M3 3c6-4 17-1 17 8s-11 12-17 8" stroke="#688047" strokeWidth="2" />
          <path d="M8 6c4-2 8 1 8 5s-4 7-8 5" stroke="#688047" strokeWidth="2" />
          <circle cx="11" cy="11" r="1.500" fill="#688047" />
        </svg>
        <nav className="flex gap-[13px]">
          <button>Programy</button>
          <button>Miejsca</button>
          <button>System</button>
        </nav>
        <div className="ml-auto flex items-center">
          <Grip className="mr-1 h-[18px] w-[6px]" />
          <svg width="22" height="22" viewBox="0 0 22 22" className="mr-[5px]">
            <path d="M11 0l3 4 5-1-1 5 4 3-4 3 1 5-5-1-3 4-3-4-5 1 1-5-4-3 4-3-1-5 5 1z" fill="#d3141a" stroke="#9c0a0e" />
            <path d="M11 6v6M11 14v2" stroke="#fff" strokeWidth="2.500" />
          </svg>
          <svg width="20" height="20" viewBox="0 0 20 20" fill="none" className="mr-[7px]">
            <rect x="4.500" y="1.500" width="14" height="13" rx="1" fill="#f7f7f6" stroke="#7a7a78" />
            <circle cx="12" cy="7" r="3" stroke="#7a7a78" />
            <path d="M1 18L12 8" stroke="#3f6fae" strokeWidth="3" />
            <path d="M2 17L12 8" stroke="#8db4e4" />
          </svg>
          <span>nie 18 cze, 08:05</span>
        </div>
      </header>

      <div className="flex h-[23px] shrink-0 items-center border-t border-b border-t-[#3d5f90] border-b-[#4b74ad] bg-linear-to-b from-[#9abbe6] to-[#799fd2] pr-[3px] pl-1">
        <AxisGlyph letter="X" size={17} />
        <h1 className="flex-1 text-center text-[13px] font-bold text-white">ncam.ngc - AXIS 2.7.9 na plasma mm</h1>
        <div className="flex gap-1">
          <WindowButton label="Minimalizuj"><path d="M2 9h8" strokeWidth="2" /></WindowButton>
          <WindowButton label="Maksymalizuj"><path d="M2.500 2.500h7v7h-7zM5 5h2v2H5z" /></WindowButton>
          <WindowButton label="Zamknij"><path d="M2.500 2.500l7 7M9.500 2.500l-7 7" strokeWidth="2" /></WindowButton>
        </div>
      </div>

      <nav className="flex h-[27px] shrink-0 items-center gap-[10px] border-t-2 border-r border-b border-t-white border-r-[#828282] border-b-[#828282] pb-[2px] pl-[7px]">
        {axisMenu.map((m) => (
          <button key={m}>
            {m === 'Maszyna' ? <><span className="underline underline-offset-2">M</span>aszyna</> : m}
          </button>
        ))}
      </nav>

      <div className="flex min-h-0 flex-1 gap-[3px] pr-1">
        <AxisPane />
        <CamPane />
      </div>

      <footer className="flex h-[26px] shrink-0 items-center border-t border-[#3d5878] bg-[#edeceb] pr-[2px] pl-[1px] text-[13px]">
        <button aria-label="Pokaż pulpit" className="flex size-[22px] items-center justify-center rounded-[3px] border border-[#9d9b98] bg-[#f3f2f1]">
          <svg width="16" height="16" viewBox="0 0 16 16">
            <path d="M1.500 13.500v-10l1-1h4l1 1.500h7v9.500z" fill="#b9bea2" stroke="#6c7158" />
            <rect x="4" y="6.500" width="8" height="6" fill="#e5e7d6" stroke="#6c7158" />
            <circle cx="8" cy="9.500" r="1.500" fill="none" stroke="#6c7158" />
          </svg>
        </button>
        <Grip className="mx-[3px] h-[18px] w-[6px]" />
        <button className="flex h-[22px] w-[189px] items-center gap-[6px] rounded-[3px] border border-[#8f8d8a] bg-linear-to-b from-[#c4c2bf] to-[#d0cecb] pl-2">
          <AxisGlyph letter="X" size={17} />
          ncam.ngc
        </button>
        <div className="ml-auto flex h-[22px] w-40 overflow-hidden rounded-[3px] bg-[#a9a6a2]">
          <button aria-label="Obszar 1" className="flex-1" />
          <button aria-label="Obszar 2" className="flex flex-1 items-center justify-center border border-t-2 border-x-white border-t-[#4b74ad] border-b-white bg-[#d2e2f7]"><AxisGlyph letter="X" size={17} /></button>
          <button aria-label="Obszar 3" className="flex-1" />
          <button aria-label="Obszar 4" className="flex-1 border-l border-white" />
        </div>
      </footer>
    </div>
  );
}
